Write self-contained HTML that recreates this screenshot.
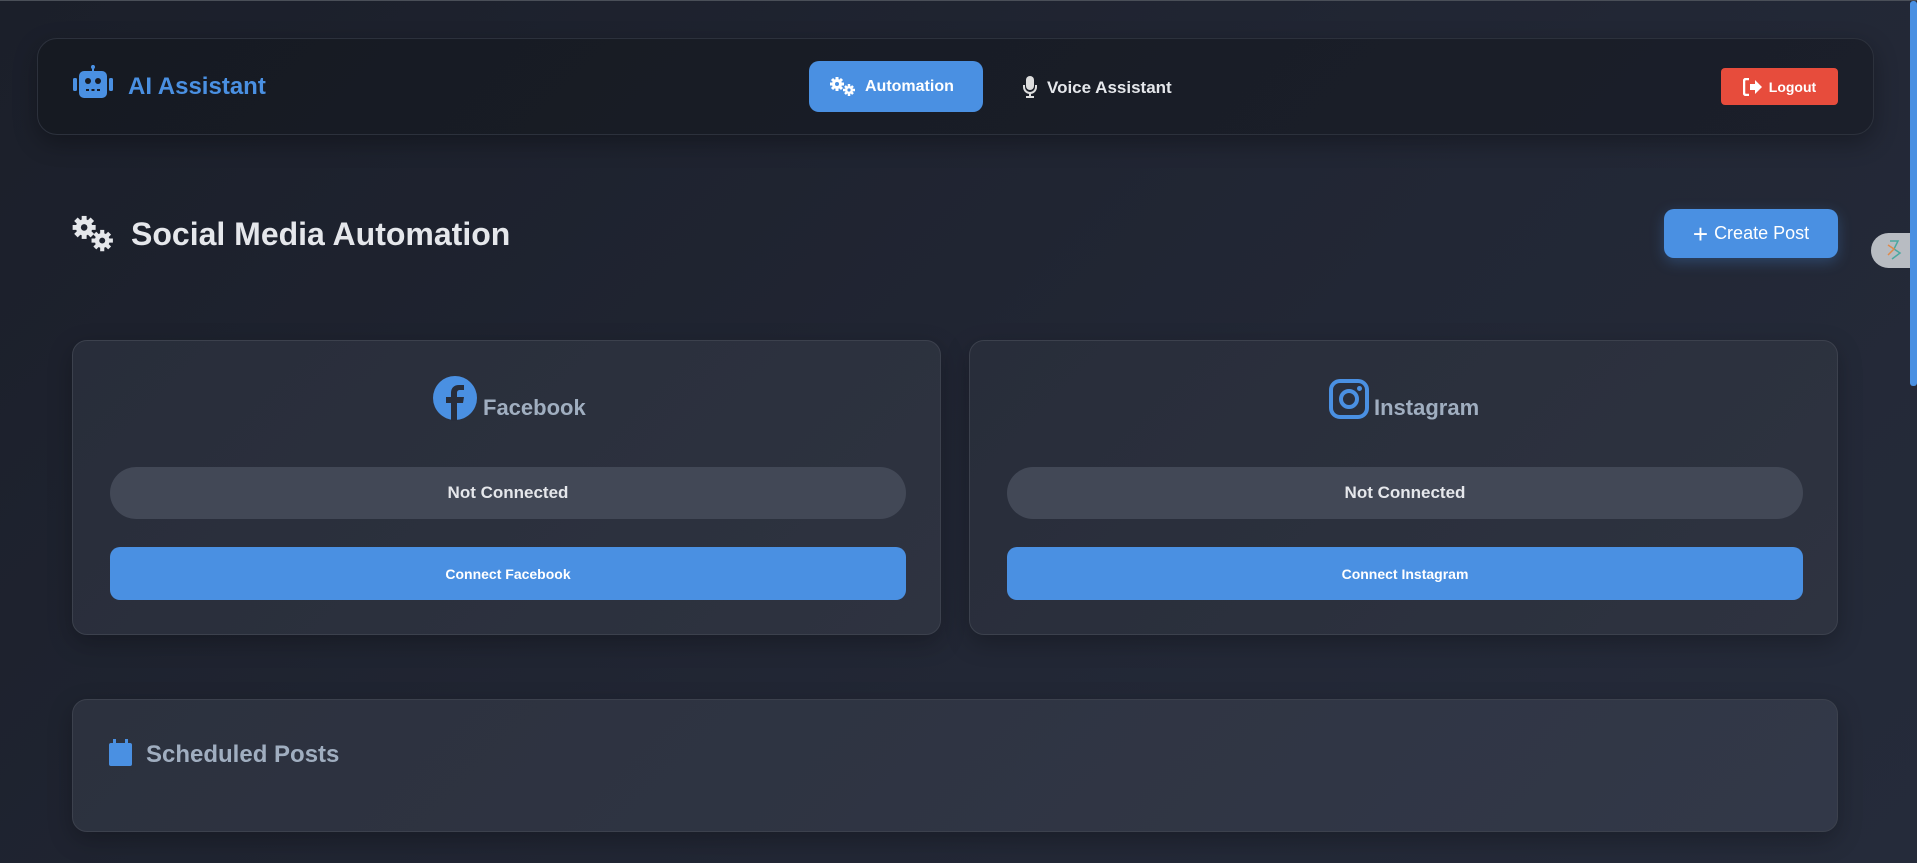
<!DOCTYPE html>
<html><head><meta charset="utf-8"><style>
*{box-sizing:border-box;margin:0;padding:0}
html,body{width:1917px;height:863px;overflow:hidden}
body{background:linear-gradient(135deg,#1b1f2a 0%,#222735 60%,#252b3a 100%);font-family:"Liberation Sans",sans-serif;position:relative;border-top:1px solid #4a4f58}
.abs{position:absolute}
.nav{left:37px;top:37px;width:1837px;height:97px;border:1px solid #2c313c;border-radius:20px;background:linear-gradient(135deg,#161a22,#1b1f2a);box-shadow:0 8px 24px rgba(0,0,0,.3)}
.card{background:linear-gradient(135deg,#282d3a,#2e3340);border:1px solid #3c414d;border-radius:15px;box-shadow:0 8px 24px rgba(0,0,0,.25)}
.pill{left:37px;width:796px;height:52px;border-radius:26px;background:#424856;color:#e5e7eb;font-weight:bold;font-size:17px;display:flex;align-items:center;justify-content:center}
.btn{left:37px;width:796px;height:53px;border-radius:10px;background:#4a90e2;color:#fff;font-weight:bold;font-size:14px;display:flex;align-items:center;justify-content:center}
</style></head><body>
<div class="abs nav"></div>
<svg class="abs" style="left:73px;top:64px" width="40" height="34" viewBox="0 0 40 34"><rect x="19" y="0" width="2" height="6" fill="#4a90e2"/><circle cx="20" cy="2" r="2" fill="#4a90e2"/><rect x="6" y="6" width="28" height="27" rx="5" fill="#4a90e2"/><rect x="0" y="13" width="4" height="13" rx="1.5" fill="#4a90e2"/><rect x="36" y="13" width="4" height="13" rx="1.5" fill="#4a90e2"/><circle cx="15" cy="16" r="3" fill="#171b24"/><circle cx="25" cy="16" r="3" fill="#171b24"/><rect x="13" y="24" width="3" height="2" fill="#171b24"/><rect x="18.5" y="24" width="3" height="2" fill="#171b24"/><rect x="24" y="24" width="3" height="2" fill="#171b24"/></svg>
<div class="abs" style="left:128px;top:72px;font-size:24px;font-weight:bold;color:#4a90e2">AI Assistant</div>
<div class="abs" style="left:809px;top:60px;width:174px;height:51px;border-radius:10px;background:#4a90e2;color:#fff;font-weight:bold;font-size:16px;display:flex;align-items:center;padding-left:20px">
<svg width="28" height="20" viewBox="0 0 28 20" style="margin-right:8px"><g fill="#fff"><circle cx="8" cy="7" r="5"/><g stroke="#fff" stroke-width="3"><line x1="8" y1="0" x2="8" y2="14"/><line x1="1" y1="7" x2="15" y2="7"/><line x1="3" y1="2" x2="13" y2="12"/><line x1="13" y1="2" x2="3" y2="12"/></g><circle cx="20" cy="13" r="4"/><g stroke="#fff" stroke-width="2.5"><line x1="20" y1="7" x2="20" y2="19"/><line x1="14" y1="13" x2="26" y2="13"/><line x1="16" y1="9" x2="24" y2="17"/><line x1="24" y1="9" x2="16" y2="17"/></g></g><circle cx="8" cy="7" r="2" fill="#4a90e2"/><circle cx="20" cy="13" r="1.6" fill="#4a90e2"/></svg>Automation</div>
<svg class="abs" style="left:1023px;top:75px" width="14" height="22" viewBox="0 0 14 22"><rect x="3" y="0" width="8" height="14" rx="4" fill="#ddd"/><path d="M1 9v2a6 6 0 0 0 12 0V9" stroke="#ddd" stroke-width="2" fill="none"/><rect x="6" y="16" width="2" height="4" fill="#ddd"/><rect x="3" y="20" width="8" height="2" fill="#ddd"/></svg>
<div class="abs" style="left:1047px;top:77px;font-size:17px;font-weight:bold;color:#e5e7eb">Voice Assistant</div>
<div class="abs" style="left:1721px;top:67px;width:117px;height:37px;border-radius:4px;background:#e74c3c;color:#fff;font-weight:bold;font-size:14px;display:flex;align-items:center;justify-content:center">
<svg width="20" height="18" viewBox="0 0 20 18" style="margin-right:6px"><path d="M6 1H3a2 2 0 0 0-2 2v12a2 2 0 0 0 2 2h3" stroke="#fff" stroke-width="2.5" fill="none"/><path d="M7 6h5V2l7 7-7 7v-4H7z" fill="#fff"/></svg>Logout</div>

<svg class="abs" style="left:71px;top:213px" width="46" height="40" viewBox="0 0 28 24"><g fill="#e5e7eb"><circle cx="8" cy="8" r="5"/><g stroke="#e5e7eb" stroke-width="3"><line x1="8" y1="1" x2="8" y2="15"/><line x1="1" y1="8" x2="15" y2="8"/><line x1="3" y1="3" x2="13" y2="13"/><line x1="13" y1="3" x2="3" y2="13"/></g><circle cx="19" cy="16" r="4.5"/><g stroke="#e5e7eb" stroke-width="2.5"><line x1="19" y1="9.5" x2="19" y2="22.5"/><line x1="12.5" y1="16" x2="25.5" y2="16"/><line x1="14.5" y1="11.5" x2="23.5" y2="20.5"/><line x1="23.5" y1="11.5" x2="14.5" y2="20.5"/></g></g><circle cx="8" cy="8" r="2" fill="#1e2330"/><circle cx="19" cy="16" r="1.8" fill="#1e2330"/></svg>
<div class="abs" style="left:131px;top:215px;font-size:32px;font-weight:bold;color:#e5e7eb">Social Media Automation</div>
<div class="abs" style="left:1664px;top:208px;width:174px;height:49px;border-radius:10px;background:#4a90e2;color:#fff;font-size:18px;display:flex;align-items:center;justify-content:center;box-shadow:0 4px 14px rgba(74,144,226,.3)"><span style="font-size:26px;margin-right:6px;line-height:1">+</span>Create Post</div>
<div class="abs" style="left:1871px;top:232px;width:46px;height:35px;border-radius:18px 0 0 18px;background:#b8bcc2"></div>
<svg class="abs" style="left:1884px;top:238px" width="20" height="22" viewBox="0 0 20 22"><path d="M6 2l8 0-4 8 6 4-8 6" stroke="#4aa8a0" stroke-width="1.5" fill="none"/><path d="M4 6l6 4-6 6" stroke="#e08a4a" stroke-width="1.5" fill="none"/></svg>
<div class="abs" style="left:1910px;top:0;width:7px;height:385px;background:#4a90e2;border-radius:3px"></div>

<div class="abs card" style="left:72px;top:339px;width:869px;height:295px">
<svg class="abs" style="left:360px;top:35px" width="44" height="45" viewBox="0 0 44 45"><circle cx="22" cy="22" r="22" fill="#4a90e2"/><path d="M24 45V27h6l1-6h-7v-4c0-2 1-3 3-3h4V9h-5c-5 0-8 3-8 8v4h-5v6h5v18z" fill="#282d3a"/></svg>
<div class="abs" style="left:410px;top:54px;font-size:22px;font-weight:bold;color:#a0aec0">Facebook</div>
<div class="abs pill" style="top:126px">Not Connected</div>
<div class="abs btn" style="top:206px">Connect Facebook</div>
</div>
<div class="abs card" style="left:969px;top:339px;width:869px;height:295px">
<svg class="abs" style="left:359px;top:38px" width="40" height="40" viewBox="0 0 40 40"><rect x="2" y="2" width="36" height="36" rx="9" stroke="#4a90e2" stroke-width="4" fill="none"/><circle cx="20" cy="20" r="8" stroke="#4a90e2" stroke-width="4" fill="none"/><circle cx="30.5" cy="9.5" r="2.5" fill="#4a90e2"/></svg>
<div class="abs" style="left:404px;top:54px;font-size:22px;font-weight:bold;color:#a0aec0">Instagram</div>
<div class="abs pill" style="top:126px">Not Connected</div>
<div class="abs btn" style="top:206px">Connect Instagram</div>
</div>
<div class="abs card" style="left:72px;top:698px;width:1766px;height:133px;background:linear-gradient(135deg,#2c313e,#323848)">
<svg class="abs" style="left:36px;top:39px" width="23" height="27" viewBox="0 0 23 27"><rect x="4" y="0" width="3" height="6" fill="#4a90e2"/><rect x="16" y="0" width="3" height="6" fill="#4a90e2"/><rect x="0" y="4" width="23" height="23" rx="2" fill="#4a90e2"/></svg>
<div class="abs" style="left:73px;top:41px;font-size:24px;font-weight:bold;color:#a0aec0">Scheduled Posts</div>
</div>
</body></html>
